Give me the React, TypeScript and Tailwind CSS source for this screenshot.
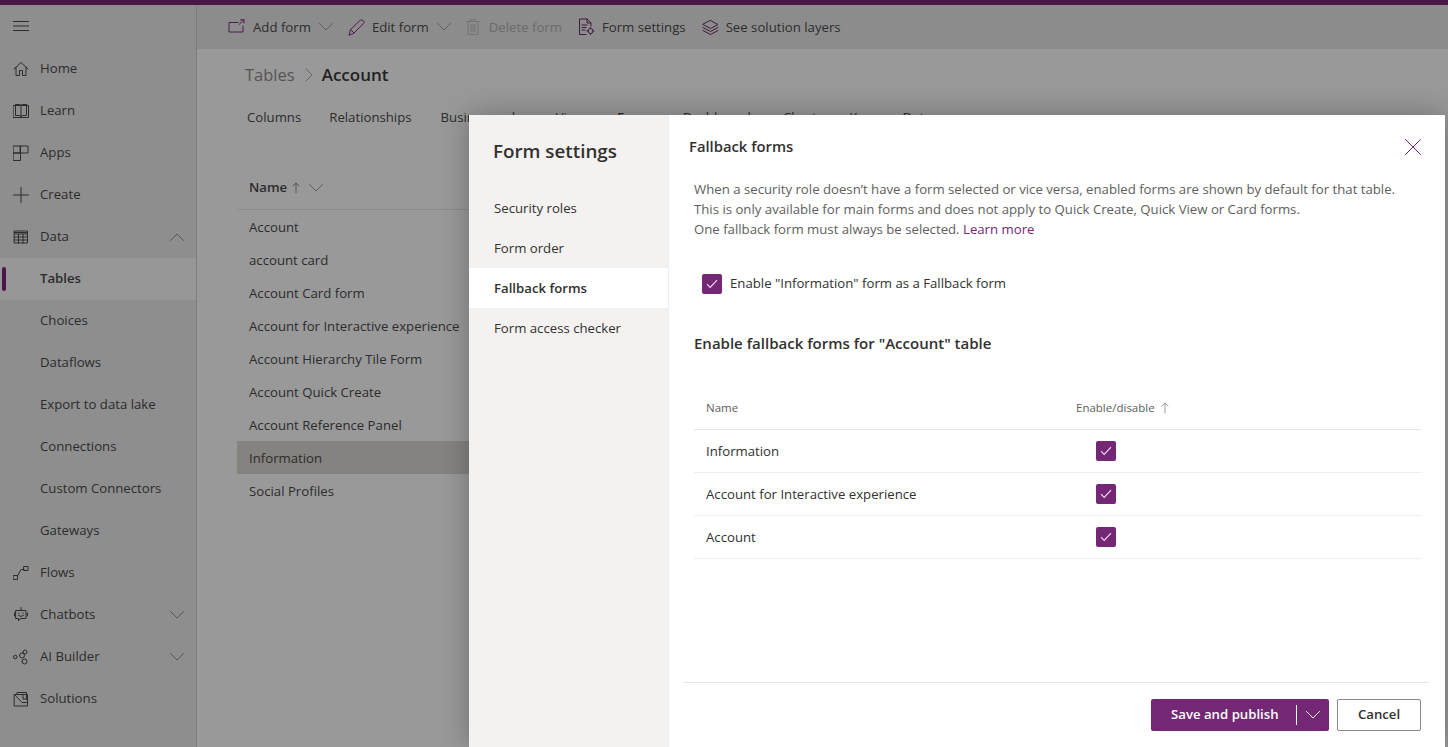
import React from "react";

const S = { fill: "none", stroke: "currentColor", strokeWidth: 1, strokeLinecap: "round" as const, strokeLinejoin: "round" as const };
const Ic = ({ d, size = 16, className = "" }: { d: string; size?: number; className?: string }) => (
  <svg width={size} height={size} viewBox="0 0 16 16" className={className} {...S}><path d={d} /></svg>
);
const Chev = ({ up = false, className = "" }: { up?: boolean; className?: string }) => (
  <svg width="14" height="8" viewBox="0 0 14 8" className={className} {...S}><path d={up ? "M.5 7.5 7 1l6.5 6.5" : "M.5.5 7 7 13.5.5"} /></svg>
);
const Check = () => (
  <div className="flex h-5 w-5 items-center justify-center rounded-[2px] bg-[#742774]">
    <svg width="12" height="10" viewBox="0 0 12 10" fill="none" stroke="#f3d9f3" strokeWidth="1.2"><path d="M1 5.2 4.2 8.4 11 1.2" /></svg>
  </div>
);

const icons: Record<string, React.ReactNode> = {
  Home: <Ic d="M1 8 8 1.500 15 8M3 6.500V14.500H6.500V9.500H9.500V14.500H13V6.500" />,
  Learn: <Ic d="M.5 2.500H15.500V14.500H.5ZM2.500 2.500V12.500H6.500Q8 12.500 8 14.500Q8 12.500 9.500 12.500H13.500V2.500M8 2V14M2.500 1.500H6.500Q8 1.500 8 3Q8 1.500 9.500 1.500H13.500" />,
  Apps: <Ic d="M.5 1H7.500V8H.5ZM7.500 1H15V8H7.500ZM.5 8H7.500V15.500H.5Z" />,
  Create: <Ic d="M8 .5V15.500M.5 8H15.500" />,
  Data: <Ic d="M1.500 2H14.500V14H1.500ZM1.500 5H14.500M1.500 8H14.500M1.500 11H14.500M5.500 5V14M10 5V14M1.500 3.500H14.500" />,
  Flows: <Ic d="M.5 10.500H4.500V14.500H.5ZM11 1.500H15V5.500H11ZM4.500 11 8 4.500H11" />,
  Chatbots: <Ic d="M8 .5V3M3 3.500H13V11.500H7.500L5.500 14V11.500H3ZM1.500 6V9M14.500 6V9M5.500 8.500Q8 10.500 10.500 8.500M6 6V6.500M10 6V6.500" />,
  "AI Builder": <Ic d="M.5 8a1.800 1.800 0 1 0 3.600 0a1.800 1.800 0 1 0-3.600 0M6.500 6.500a2.500 2.500 0 1 0 5 0a2.500 2.500 0 1 0-5 0M10 3a2 2 0 1 0 4 0a2 2 0 1 0-4 0M9 12.500a2.500 2.500 0 1 0 5 0a2.500 2.500 0 1 0-5 0" />,
  Solutions: <Ic d="M1.500 3.500H14.500V15H1.500ZM4 3.500V1.500H13.500V8M1.500 3.500 9 11.500H14.500M10 3.500V8H13.500" />,
};

const navItems: { label: string; arrow?: "up" | "down"; active?: boolean }[] = [
  { label: "Home" }, { label: "Learn" }, { label: "Apps" }, { label: "Create" },
  { label: "Data", arrow: "up" }, { label: "Tables", active: true }, { label: "Choices" }, { label: "Dataflows" },
  { label: "Export to data lake" }, { label: "Connections" }, { label: "Custom Connectors" }, { label: "Gateways" },
  { label: "Flows" }, { label: "Chatbots", arrow: "down" }, { label: "AI Builder", arrow: "down" }, { label: "Solutions" },
];

const Sidebar = () => (
  <aside className="w-[197px] shrink-0 border-r border-[#7d7d7d] bg-[#8e8e8e] text-[#2c2c2c]">
    <div className="flex h-[43px] items-center pb-[1px] pl-[13px]">
      <svg width="16" height="12" viewBox="0 0 16 12" fill="none" stroke="#2c2c2c"><path d="M0 1.500H16M0 6H16M0 10.500H16" /></svg>
    </div>
    {navItems.map((n) => (
      <div key={n.label} className={`relative flex h-[42px] items-center ${n.active ? "bg-[#979797] font-semibold" : ""}`}>
        {n.active && <div className="absolute left-[2px] top-[9px] h-[24px] w-[4px] rounded-sm bg-[#4a1648]" />}
        <div className="flex w-10 shrink-0 justify-center pl-[2px]">{icons[n.label]}</div>
        <span className="flex-1 whitespace-nowrap">{n.label}</span>
        {n.arrow && <Chev up={n.arrow === "up"} className="mr-[12px] text-[#565656]" />}
      </div>
    ))}
  </aside>
);

const tool = "flex items-center whitespace-nowrap";
const Toolbar = () => (
  <div className="flex h-[44px] items-center bg-[#8c8c8c] pl-[31px] pt-[1px] text-[#2c2c2c]">
    <div className={tool}>
      <svg width="18" height="16" viewBox="0 0 18 16" className="text-[#4f1a4f]" {...S}><path d="M10 3.500H1V13H15V7M11 5.500 16 .8M12.500.8H16V4" /></svg>
      <span className="ml-[7px]">Add form</span>
      <Chev className="ml-2 text-[#5e5e5e]" />
    </div>
    <div className={`${tool} ml-[15px]`}>
      <svg width="17" height="17" viewBox="0 0 17 17" className="text-[#4f1a4f]" {...S}><path d="M1 16 2.500 10.500 12.500 1Q14 .5 15.500 2T15.500 4.500L6 14ZM2.500 10.500 6 14" /></svg>
      <span className="ml-[7px]">Edit form</span>
      <Chev className="ml-2 text-[#5e5e5e]" />
    </div>
    <div className={`${tool} ml-[14px] text-[#6b6b6b]`}>
      <svg width="16" height="18" viewBox="0 0 16 18" className="text-[#737373]" {...S}><path d="M1.500 3.500H14.500M5.500 3.500V1.500H10.500V3.500M3 3.500V16.500H13V3.500M6 6.500V14M8 6.500V14M10 6.500V14" /></svg>
      <span className="ml-[8px]">Delete form</span>
    </div>
    <div className={`${tool} ml-[16px]`}>
      <svg width="17" height="18" viewBox="0 0 17 18" className="text-[#3f1a3f]" {...S}><path d="M8 16.500H1.500V1H9L13 5V8M9 1V5H13M4 7H9M4 9.500H8M4 12H7M10 13a2.500 2.500 0 1 0 5 0a2.500 2.500 0 1 0-5 0M12.500 9.500V10.500M12.500 15.500V16.500M9 13H10M15 13H16" /></svg>
      <span className="ml-[7px]">Form settings</span>
    </div>
    <div className={`${tool} ml-[16px]`}>
      <svg width="17" height="17" viewBox="0 0 17 17" className="text-[#3f1a3f]" {...S}><path d="M8.500 1.500 16 5.500 8.500 9.500 1 5.500ZM1 8.500 8.500 12.500 16 8.500M1 11.500 8.500 15.500 16 11.500" /></svg>
      <span className="ml-[7px]">See solution layers</span>
    </div>
  </div>
);

const tabs = [
  { t: "Columns", c: "" },
  { t: "Relationships", c: "ml-[28px]" },
  { t: "Business rules", c: "ml-[29px]" },
  { t: "Views", c: "ml-[27px]" },
  { t: "Forms", c: "ml-[26px] font-semibold" },
  { t: "Dashboards", c: "ml-[26px]" },
  { t: "Charts", c: "ml-[26px]" },
  { t: "Keys", c: "ml-[26px]" },
  { t: "Data", c: "ml-[25px]" },
];
const formsList = ["Account", "account card", "Account Card form", "Account for Interactive experience", "Account Hierarchy Tile Form", "Account Quick Create", "Account Reference Panel", "Information", "Social Profiles"];

const Main = () => (
  <main className="flex-1 bg-[#999999] text-[#2c2c2c]">
    <Toolbar />
    <div className="flex h-[54px] items-center pb-[2px] pl-[48px]">
      <span className="text-[16.5px] text-[#555555]">Tables</span>
      <svg width="8" height="14" viewBox="0 0 8 14" className="ml-[10px] mr-[9px] text-[#666666]" {...S}><path d="M1 1 7 7 1 13" /></svg>
      <span className="text-[17px] font-semibold text-[#222222]">Account</span>
    </div>
    <div className="flex h-[28px] items-center pl-[50px] pt-[1px]">
      {tabs.map((x) => <span key={x.t} className={`whitespace-nowrap ${x.c}`}>{x.t}</span>)}
    </div>
    <div className="ml-[40px] mt-[36px] w-[240px]">
      <div className="flex h-[43px] items-center border-b border-[#8a8a8a] pb-[1px] pl-[12px]">
        <span className="font-semibold">Name</span>
        <svg width="8" height="12" viewBox="0 0 8 12" className="ml-[5px] text-[#555555]" {...S}><path d="M4 11V1M1 4 4 1 7 4" /></svg>
        <Chev className="ml-[9px] text-[#5e5e5e]" />
      </div>
      <div>
        {formsList.map((f) => (
          <div key={f} className={`flex h-[33px] items-center whitespace-nowrap pl-[12px] pt-[2px] ${f === "Information" ? "bg-[#848380]" : ""}`}>{f}</div>
        ))}
      </div>
    </div>
  </main>
);

const panelNav = ["Security roles", "Form order", "Fallback forms", "Form access checker"];
const rows = ["Information", "Account for Interactive experience", "Account"];

const Modal = () => (
  <div className="absolute bottom-0 left-[469px] right-[3px] top-[115px] flex bg-white text-[#323130] shadow-[0_0_28px_rgba(0,0,0,0.28)]">
    <div className="w-[199px] shrink-0 bg-[#f3f2f1]">
      <h2 className="pl-6 pt-[22px] text-[18.8px] font-semibold leading-[28px]">Form settings</h2>
      <div className="mt-[23px]">
        {panelNav.map((p) => (
          <div key={p} className={`flex h-10 items-center pl-[25px] pt-[2px] ${p === "Fallback forms" ? "bg-white font-semibold" : ""}`}>{p}</div>
        ))}
      </div>
    </div>
    <div className="flex min-w-0 flex-1 flex-col border-l border-[#eeeeee]">
      <div className="flex items-center justify-between pl-[20px] pr-[24px] pt-[20px]">
        <h3 className="pb-[2px] text-[14.8px] font-semibold leading-[22px]">Fallback forms</h3>
        <svg width="16" height="16" viewBox="0 0 16 16" className="text-[#742774]" {...S}><path d="M.5.5 15.500 15.500M15.500.5.5 15.500" /></svg>
      </div>
      <div className="pl-[25px] pt-[20px] leading-[20px] text-[#605e5c]">
        <p>When a security role doesn’t have a form selected or vice versa, enabled forms are shown by default for that table.</p>
        <p>This is only available for main forms and does not apply to Quick Create, Quick View or Card forms.</p>
        <p>One fallback form must always be selected. <span className="text-[#742774]">Learn more</span></p>
      </div>
      <div className="ml-[33px] mt-[35px] flex items-center gap-[8px]">
        <Check />
        <span>Enable "Information" form as a Fallback form</span>
      </div>
      <h4 className="pl-[25px] pt-[37px] text-[15px] font-semibold leading-[24px]">Enable fallback forms for "Account" table</h4>
      <div className="ml-[25px] mr-[24px] mt-[32px]">
        <div className="flex h-[43px] items-center border-b border-[#e6e6e6] pl-[12px] text-[11.5px] text-[#605e5c]">
          <span className="w-[370px]">Name</span>
          <span>Enable/disable</span>
          <svg width="8" height="12" viewBox="0 0 8 12" className="ml-[6px] text-[#a19f9d]" {...S}><path d="M4 11V1M1 4 4 1 7 4" /></svg>
        </div>
        {rows.map((r) => (
          <div key={r} className="flex h-[43px] items-center border-b border-[#eeeeee] pl-[12px]">
            <span className="w-[390px] pt-[2px]">{r}</span>
            <Check />
          </div>
        ))}
      </div>
      <div className="ml-[15px] mr-[16px] mt-auto flex h-[65px] items-center justify-end border-t border-[#e6e6e6] pr-[8px]">
        <button className="flex h-8 w-[178px] items-center rounded-[2px] bg-[#742774] font-semibold text-white">
          <span className="flex-1 pl-[20px] text-left">Save and publish</span>
          <span className="h-[20px] w-px bg-white" />
          <Chev className="mx-[9px]" />
        </button>
        <button className="ml-2 h-8 w-[84px] rounded-[2px] border border-[#8a8886] bg-white font-semibold">Cancel</button>
      </div>
    </div>
  </div>
);

export default function App() {
  return (
    <div className="relative flex h-[747px] w-[1448px] flex-col overflow-hidden text-[13.2px] font-['Open_Sans',sans-serif]">
      <div className="h-[5px] shrink-0 bg-[#4a1648]" />
      <div className="flex min-h-0 flex-1">
        <Sidebar />
        <Main />
      </div>
      <Modal />
    </div>
  );
}
